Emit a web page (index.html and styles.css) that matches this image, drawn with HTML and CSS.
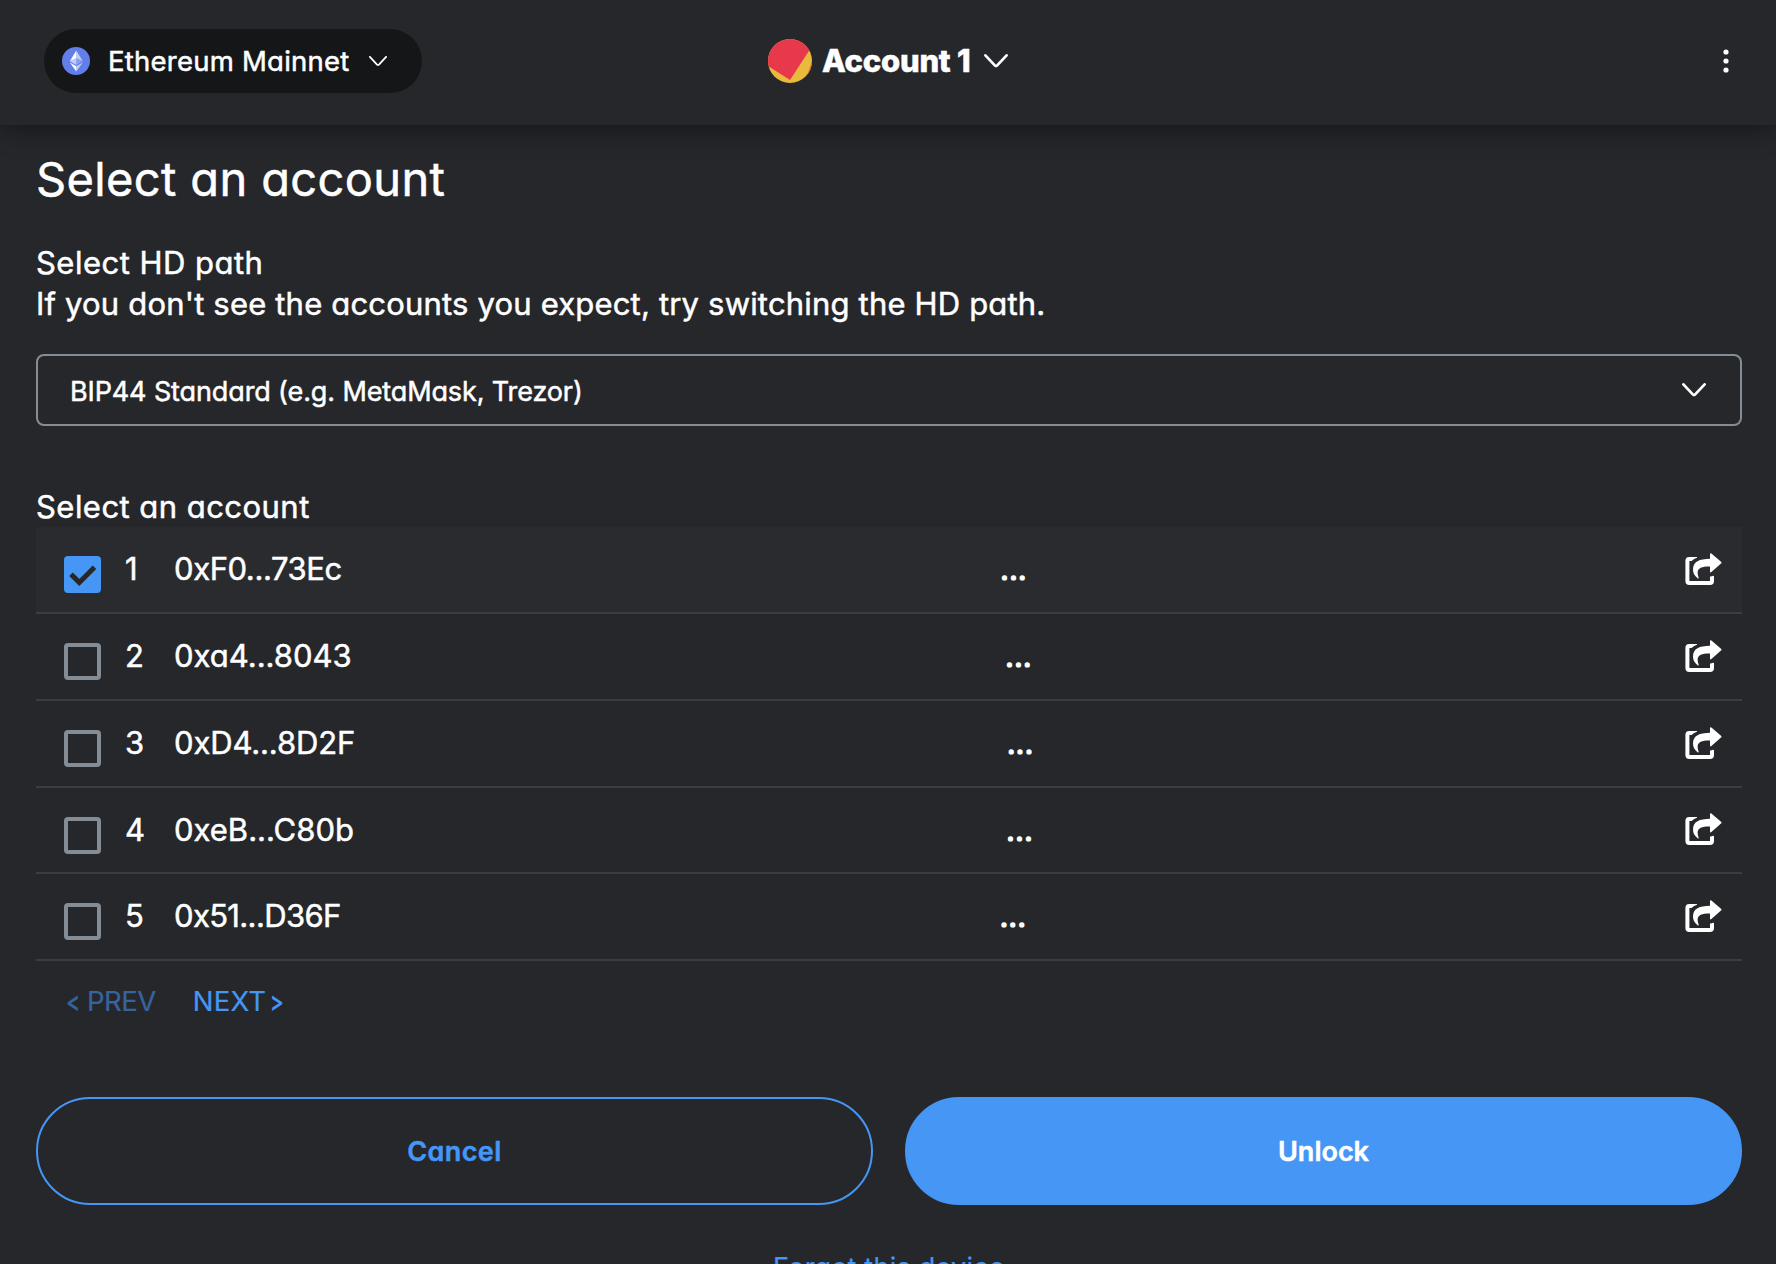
FILE: index.html
```
<!DOCTYPE html>
<html lang="en">
<head>
<meta charset="utf-8">
<title>Select an account</title>
<link rel="stylesheet" href="styles.css">
</head>
<body>
<svg class="defs" width="0" height="0" aria-hidden="true">
  <symbol id="share" viewBox="0 0 37 32">
    <path d="M12 4H4.2Q.4 4 .4 8V28Q.4 32 4.4 32H25Q29 32 29 28V23.6Q29 22.6 28 22.8Q26 23.6 25.6 23.3Q25 23.3 25 24.4V28H4.4V8H6.6Q9 5.4 12 4.7Z" fill="currentColor"/>
    <path d="M25 1Q25 -.5 26.4 .6L36 8.8Q37 9.6 36 10.5L26.4 19Q25 20 25 18.4V13.5C15 13.4 10.5 15.6 13.6 24.6Q13.8 25.9 12.6 25.2C9 22.5 8 19.5 8 16.5C8 8.5 14.5 6 25 5.8Z" fill="currentColor"/>
  </symbol>
  <symbol id="check" viewBox="0 0 37 37">
    <path d="M7 18.2L15.3 26.4L30.5 11.3" fill="none" stroke="#26272b" stroke-width="5"/>
  </symbol>
</svg>

<header class="header">
  <button class="network">
    <svg class="network-icon" viewBox="0 0 28 28">
      <circle cx="14" cy="14" r="14" fill="#627eea"/>
      <path d="M14.3 3.5V11.3L20.8 14.2Z" fill="#c0cbf7"/>
      <path d="M14.3 3.5L7.8 14.2L14.3 11.3Z" fill="#fff"/>
      <path d="M14.3 19.3V24.5L20.8 15.5Z" fill="#c0cbf7"/>
      <path d="M14.3 24.5V19.3L7.8 15.5Z" fill="#fff"/>
      <path d="M14.3 18L20.8 14.2L14.3 11.3Z" fill="#8a9ff0"/>
      <path d="M7.8 14.2L14.3 18V11.3Z" fill="#c0cbf7"/>
    </svg>
    <span class="network-name">Ethereum Mainnet</span>
    <svg class="network-caret" viewBox="0 0 18 10"><path d="M.9 .9L7.8 8.3Q9 9.5 10.2 8.3L17.1 .9" fill="none" stroke="#fff" stroke-width="1.8" stroke-linecap="round"/></svg>
  </button>

  <button class="account">
    <svg class="avatar" viewBox="0 0 44 44">
      <clipPath id="round"><circle cx="22" cy="22" r="22"/></clipPath>
      <g clip-path="url(#round)">
        <rect width="44" height="44" fill="#e8bb3c"/>
        <path d="M36.5 44L44 22V44Z" fill="#ee6a2a"/>
        <path d="M-8 22L22 41L52 -5V-10H-8Z" fill="#e8394c"/>
      </g>
    </svg>
    <span class="account-name">Account 1</span>
    <svg class="caret" viewBox="0 0 24 14"><path d="M1.4 1.4L10.8 11.4Q12 12.7 13.2 11.4L22.6 1.4" fill="none" stroke="#fff" stroke-width="2.7" stroke-linecap="round"/></svg>
  </button>

  <button class="menu" aria-label="Menu">
    <svg viewBox="0 0 6 24" width="6" height="24" fill="#fff"><circle cx="3" cy="3" r="2.6"/><circle cx="3" cy="12" r="2.6"/><circle cx="3" cy="21" r="2.6"/></svg>
  </button>
</header>

<main class="content">
  <h1 class="title">Select an account</h1>
  <p class="path-label">Select HD path</p>
  <p class="path-hint">If you don't see the accounts you expect, try switching the HD path.</p>

  <div class="select">
    <span class="select-value">BIP44 Standard (e.g. MetaMask, Trezor)</span>
    <svg class="caret" viewBox="0 0 24 14"><path d="M1.4 1.4L10.8 11.4Q12 12.7 13.2 11.4L22.6 1.4" fill="none" stroke="#fff" stroke-width="2.7" stroke-linecap="round"/></svg>
  </div>

  <p class="list-label">Select an account</p>
  <ul class="list">
    <li class="row row-selected">
      <div class="row-main"><span class="box box-checked"><svg viewBox="0 0 37 37"><use href="#check"/></svg></span><span class="index">1</span><span class="address">0xF0...73Ec</span></div>
      <span class="balance">...</span>
      <svg class="share"><use href="#share"/></svg>
    </li>
    <li class="row">
      <div class="row-main"><span class="box"></span><span class="index">2</span><span class="address">0xa4...8043</span></div>
      <span class="balance">...</span>
      <svg class="share"><use href="#share"/></svg>
    </li>
    <li class="row">
      <div class="row-main"><span class="box"></span><span class="index">3</span><span class="address">0xD4...8D2F</span></div>
      <span class="balance">...</span>
      <svg class="share"><use href="#share"/></svg>
    </li>
    <li class="row">
      <div class="row-main"><span class="box"></span><span class="index">4</span><span class="address">0xeB...C80b</span></div>
      <span class="balance">...</span>
      <svg class="share"><use href="#share"/></svg>
    </li>
    <li class="row">
      <div class="row-main"><span class="box"></span><span class="index">5</span><span class="address">0x51...D36F</span></div>
      <span class="balance">...</span>
      <svg class="share"><use href="#share"/></svg>
    </li>
  </ul>

  <nav class="pager">
    <button class="page prev"><span class="angle">&lt;</span><span>PREV</span></button>
    <button class="page next"><span>NEXT</span><span class="angle">&gt;</span></button>
  </nav>

  <div class="actions">
    <button class="action cancel">Cancel</button>
    <button class="action unlock">Unlock</button>
  </div>

  <a class="forget">Forget this device</a>
</main>
</body>
</html>
```
FILE: styles.css
```
* {
  box-sizing: border-box;
}

html {
  height: 100%;
  overflow: hidden;
}

body {
  margin: 0;
  height: 100%;
  overflow: hidden;
  background: #26272b;
  color: #fff;
  font-family: Inter, "Liberation Sans", sans-serif;
  font-size: 31px;
  line-height: 41px;
  font-feature-settings: "cv11";
  -webkit-text-stroke: 0.5px currentColor;
  white-space: nowrap;
}

h1, p, ul {
  margin: 0;
  padding: 0;
  font-weight: 400;
}

button {
  margin: 0;
  padding: 0;
  border: 0;
  background: none;
  color: inherit;
  font: inherit;
  font-feature-settings: inherit;
}

svg {
  display: block;
  flex: none;
}

.defs {
  display: none;
}

/* Header */

.header {
  display: grid;
  grid-template-columns: 1fr auto 1fr;
  align-items: center;
  height: 125px;
  padding: 0 44px 3px;
  background: #26272b;
  box-shadow: 0 4px 24px rgba(0, 0, 0, 0.44);
}

.network {
  display: flex;
  align-items: center;
  width: 378px;
  height: 64px;
  padding: 0 35px 0 18px;
  border-radius: 32px;
  background: #151618;
}

.network-icon {
  width: 28px;
  height: 28px;
}

.network-name {
  flex: 1;
  padding-left: 18px;
  text-align: left;
  font-size: 27.5px;
  letter-spacing: 0.24px;
}

.network-caret {
  width: 18px;
  height: 10px;
}

.account {
  display: flex;
  align-items: center;
  width: 240px;
}

.avatar {
  width: 44px;
  height: 44px;
}

.account-name {
  flex: 1;
  margin-top: -2px;
  padding-left: 10px;
  text-align: left;
  font-weight: 800;
  letter-spacing: -0.25px;
}

.caret {
  width: 24px;
  height: 14px;
}

.menu {
  justify-self: end;
  margin-right: 3px;
}

/* Content */

.content {
  padding: 22px 34px 0 36px;
}

.title {
  font-size: 47px;
  line-height: 64px;
  letter-spacing: 0.36px;
}

.path-label {
  margin-top: 31px;
  letter-spacing: 0.48px;
}

.path-hint {
  letter-spacing: 0.18px;
}

.select {
  display: flex;
  align-items: center;
  justify-content: space-between;
  height: 72px;
  margin-top: 30px;
  padding: 0 34px 0 32px;
  border: 2px solid #848c96;
  border-radius: 8px;
}

.select-value {
  padding-top: 2px;
  font-size: 27px;
  letter-spacing: -0.12px;
}

.list-label {
  margin-top: 60px;
  letter-spacing: 0.46px;
}

/* Account list */

.list {
  list-style: none;
}

.row {
  display: flex;
  align-items: center;
  justify-content: space-between;
  height: 87px;
  padding: 0 20px 0 28px;
  border-bottom: 2px solid #3b3d41;
}

.row:nth-child(4) {
  height: 86px;
}

.row-selected {
  background: #2a2b2f;
}

.row-main {
  display: flex;
  align-items: center;
}

.box {
  width: 37px;
  height: 37px;
  margin-top: 10px;
  border: 4px solid #848c96;
  border-radius: 4px;
}

.box-checked {
  border: 0;
  background: #4596f5;
}

.index {
  width: 49px;
  margin: -2px 0 0 24px;
}

.address {
  margin-top: -2px;
}

.row:nth-child(1) .address {
  letter-spacing: -0.42px;
}

.row:nth-child(3) .address {
  letter-spacing: -0.15px;
}

.row:nth-child(5) .address {
  letter-spacing: -0.65px;
}

.balance {
  margin-top: -2px;
  -webkit-text-stroke-width: 1.2px;
}

.share {
  width: 37px;
  height: 32px;
  margin-top: -2px;
}

/* Pagination */

.pager {
  display: flex;
  gap: 37px;
  height: 40px;
  margin-top: 20px;
  padding-left: 31px;
  font-size: 27.5px;
  line-height: 40px;
  color: #4596f5;
  -webkit-text-stroke-width: 0.2px;
}

.page {
  display: flex;
}

.prev {
  gap: 8px;
  letter-spacing: -0.5px;
  opacity: 0.55;
}

.next {
  gap: 5px;
  letter-spacing: 0.2px;
}

.angle {
  display: flex;
  justify-content: center;
  width: 12px;
  transform: scaleX(0.75);
  -webkit-text-stroke-width: 0.7px;
}

/* Actions */

.actions {
  display: grid;
  grid-template-columns: 1fr 1fr;
  gap: 32px;
  margin-top: 76px;
}

.action {
  height: 108px;
  border: 2px solid #4596f5;
  border-radius: 54px;
  font-size: 27px;
  font-weight: 600;
}

.cancel {
  color: #4596f5;
  letter-spacing: 0.4px;
}

.unlock {
  background: #4596f5;
}

.forget {
  display: block;
  margin-top: 43px;
  line-height: 40px;
  text-align: center;
  font-size: 27px;
  letter-spacing: 0.25px;
  color: #4596f5;
  -webkit-text-stroke-width: 0.2px;
}
```
